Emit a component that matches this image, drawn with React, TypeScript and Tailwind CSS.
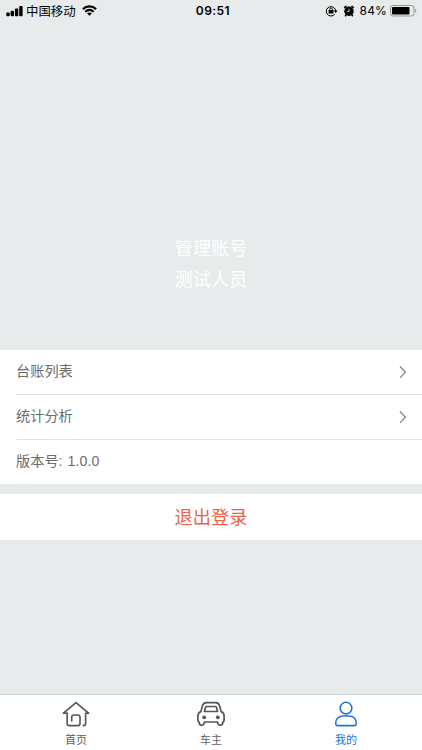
import React from 'react';

const CJK = "font-['Liberation_Sans','Noto_Sans_CJK_SC',sans-serif]";

function StatusBar() {
  return (
    <header className="relative flex h-[22px] items-center justify-between pl-[6px] pr-[5px] text-black">
      <div className="flex items-center">
        <svg width="17" height="11" viewBox="0 0 17 11" fill="currentColor">
          <rect x="0.3" y="6.6" width="3.4" height="3.6" rx="1" />
          <rect x="4.6" y="4.8" width="3.4" height="5.4" rx="1" />
          <rect x="8.9" y="2.6" width="3.4" height="7.6" rx="1" />
          <rect x="13.2" y="0" width="3.4" height="10.2" rx="1" />
        </svg>
        <span className="relative top-px ml-[3px] whitespace-nowrap text-[12.4px] leading-[22px]">中国移动</span>
        <svg className="relative -top-px ml-[6px]" width="15" height="11" viewBox="0 0 15 11" fill="none" stroke="currentColor">
          <path d="M0.9 4.1C4.7.5 10.3.5 14.1 4.1" strokeWidth="2.2" />
          <path d="M3.3 6.7c2.5-2.2 5.9-2.2 8.4 0" strokeWidth="2.1" />
          <path d="M7.5 10.8 5.1 8.4c1.4-1.2 3.4-1.2 4.8 0z" fill="currentColor" stroke="none" />
        </svg>
      </div>
      <span className="absolute inset-x-0 text-center font-['Inter',sans-serif] text-[12px] font-semibold leading-[22px] tracking-[0.45px]">
        <span className="relative left-[2px]">09:51</span>
      </span>
      <div className="flex items-center">
        <svg width="13" height="12" viewBox="0 0 13 12" fill="none" stroke="currentColor">
          <path d="M9.7 9.2A4.7 4.7 0 1 1 10.7 6" strokeWidth="1" />
          <path d="M8.7 5.5h4l-2 2.6z" fill="currentColor" stroke="none" />
          <rect x="3.6" y="5.1" width="4.9" height="3.5" rx="0.4" fill="currentColor" stroke="none" />
          <path d="M4.7 5.5V4.2a1.35 1.35 0 0 1 2.7 0v1.3" strokeWidth="0.9" />
        </svg>
        <svg className="ml-[5px]" width="12" height="12" viewBox="0 0 12 12" fill="none" stroke="currentColor">
          <circle cx="6" cy="6.2" r="4.7" fill="currentColor" stroke="none" />
          <path d="M1.6 2.6 3 1.4M10.4 2.6 9 1.4M3 10l-.5.7M9 10l.5.7" strokeWidth="1.6" strokeLinecap="round" />
          <path d="M6.1 3.8v2.7H4" stroke="#e7ebec" strokeWidth="0.8" />
        </svg>
        <span className="ml-[5px] font-['Inter',sans-serif] text-[12px] leading-[22px] tracking-[0.15px]">84%</span>
        <svg className="ml-[3px]" width="27" height="12" viewBox="0 0 27 12">
          <rect x="0.5" y="0.5" width="23.5" height="10.5" rx="2.4" fill="none" stroke="#929697" />
          <rect x="2" y="2" width="17.5" height="7.5" rx="1" fill="#000" />
          <path d="M25.1 3.8c1.6.6 1.6 3.3 0 3.9z" fill="#929697" />
        </svg>
      </div>
    </header>
  );
}

function Chevron() {
  return (
    <svg width="8" height="14" viewBox="0 0 8 14" fill="none" stroke="#858585" strokeWidth="1.3">
      <path d="m1 1.5 5.4 5.7L1 12.9" />
    </svg>
  );
}

function Row({ label, value, arrow, last }: { label: string; value?: string; arrow?: boolean; last?: boolean }) {
  return (
    <div className={`${last ? 'h-[44px]' : 'h-[45px]'} pl-4`}>
      <div className={`flex h-full items-center justify-between pr-[15px] ${last ? '' : 'border-b border-[#dfe1e2]'}`}>
        <span className="relative -top-px text-[14.2px] leading-5 text-[#6c6c6c]">
          {label}
          {value && <span className="ml-[5px] tracking-[0.1px]">{value}</span>}
        </span>
        {arrow && <Chevron />}
      </div>
    </div>
  );
}

function HomeIcon() {
  return (
    <svg width="28" height="26" viewBox="0 0 28 26" fill="none" stroke="#555" strokeWidth="1.6" strokeLinecap="round" strokeLinejoin="round">
      <path d="M5.2 12.2H1.4L14 1.6l12.6 10.6h-3v10.2q0 2.2-2.4 2.2" />
      <path d="M5.2 12.2v10.2q0 2.2 2.2 2.2h8.4q2.2 0 2.2-2.2v-6.2q0-2.2-2.2-2.2h-3.9q-2.2 0-2.2 2.2v3.8" />
    </svg>
  );
}

function CarIcon() {
  return (
    <svg width="28" height="26" viewBox="0 0 28 26" fill="none" stroke="#555" strokeWidth="1.7" strokeLinejoin="round">
      <path d="m3.9 10.6 1.5-5.7C6 2.7 7.2 1.6 9.3 1.6h9.4c2.1 0 3.3 1.1 3.9 3.3l1.5 5.7c2.3.9 3 2.3 3 4.3v4c0 1.3-.6 2-1.4 2.4v.5c0 3.2-4.5 3.2-4.9.2l-.2-1H7.4l-.2 1c-.4 3-4.9 3-4.9-.2v-.5C1.5 20.9.9 20.2.9 18.9v-4c0-2 .7-3.4 3-4.3z" />
      <path d="M9.5 5.5h9q.7 0 .9.7l1.2 4.3H7.4l1.2-4.3q.2-.7.9-.7z" />
      <circle cx="7.2" cy="16.3" r="1.9" fill="#555" stroke="none" />
      <circle cx="20.8" cy="16.3" r="1.9" fill="#555" stroke="none" />
    </svg>
  );
}

function PersonIcon() {
  return (
    <svg width="28" height="26" viewBox="0 0 28 26" fill="none" stroke="#2374d5" strokeWidth="1.6" strokeLinejoin="round">
      <circle cx="14" cy="7.1" r="5.8" />
      <path d="M3.7 22.6c0-5 3.3-7.6 7.6-7.6h5.4c4.3 0 7.6 2.6 7.6 7.6q0 2-2 2H5.7q-2 0-2-2z" />
    </svg>
  );
}

function Tab({ label, active, children }: { label: string; active?: boolean; children: React.ReactNode }) {
  return (
    <div className={`flex w-[135px] flex-col items-center pt-[6px] text-[11px] leading-4 ${active ? 'text-[#2374d5]' : 'text-[#5f5f5f]'}`}>
      {children}
      <span className="mt-[5px]">{label}</span>
    </div>
  );
}

export default function App() {
  return (
    <div className={`flex h-[750px] w-[422px] flex-col overflow-hidden bg-[#e7ebec] ${CJK}`}>
      <StatusBar />
      <section className="flex h-[328px] flex-col items-center pt-[212px] text-[18.2px] leading-[31px] text-white">
        <span>管理账号</span>
        <span>测试人员</span>
      </section>
      <section className="h-[134px] bg-white">
        <Row label="台账列表" arrow />
        <Row label="统计分析" arrow />
        <Row label="版本号:" value="1.0.0" last />
      </section>
      <div className="mt-[10px] flex h-[46px] items-center justify-center bg-white text-[18.2px] text-[#ea644f]">
        <span className="relative top-[2px]">退出登录</span>
      </div>
      <nav className="mt-auto flex h-[56px] justify-center border-t border-[#cfd2d4] bg-white">
        <Tab label="首页"><HomeIcon /></Tab>
        <Tab label="车主"><CarIcon /></Tab>
        <Tab label="我的" active><PersonIcon /></Tab>
      </nav>
    </div>
  );
}
